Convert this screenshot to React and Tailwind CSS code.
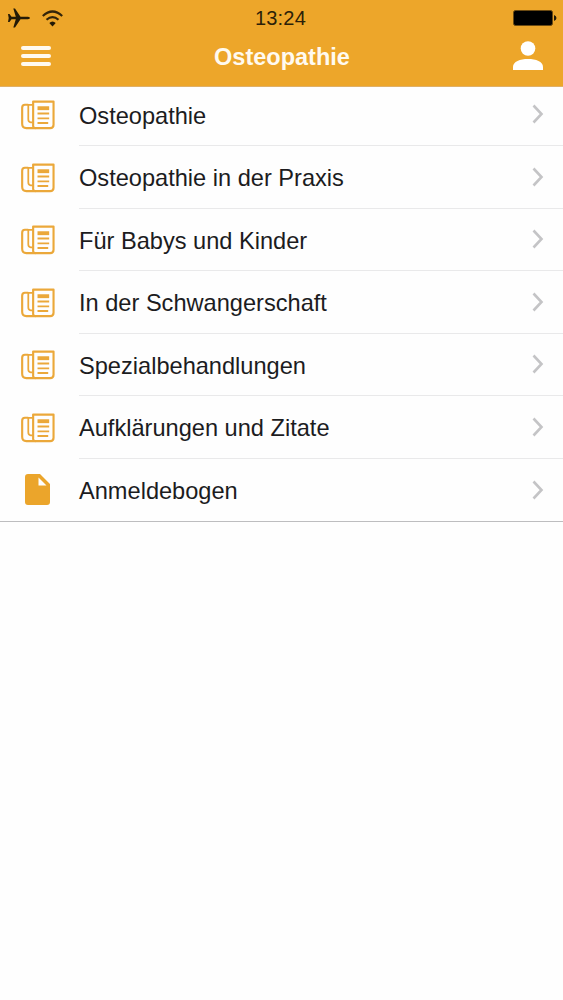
const entries = [
  { title: "Osteopathie", icon: "news" },
  { title: "Osteopathie in der Praxis", icon: "news" },
  { title: "Für Babys und Kinder", icon: "news" },
  { title: "In der Schwangerschaft", icon: "news" },
  { title: "Spezialbehandlungen", icon: "news" },
  { title: "Aufklärungen und Zitate", icon: "news" },
  { title: "Anmeldebogen", icon: "file" },
];

function NewsIcon() {
  return (
    <svg width="34" height="30" viewBox="0 0 35 30" fill="none" stroke="#eba83a" strokeWidth="2.200" strokeLinejoin="round">
      <path d="M12.500 1.200H33.500V25Q33.500 28.500 30 28.500H15Q12 28 12.500 25Z" />
      <path d="M12 4.500H7.500V19.500Q7.500 22.500 10 22.500H12" strokeWidth="1.800" />
      <path d="M7.500 4.500H4Q1.200 4.500 1.200 7.500V24Q1.200 28.500 5.500 28.500H15" />
      <path d="M17 8H29" strokeWidth="4" />
      <path d="M17 13.500H29M17 18.500H29M17 23.300H28" strokeWidth="2" />
    </svg>
  );
}

function FileIcon() {
  return (
    <svg width="25" height="31" viewBox="0 0 25 31" fill="#eba52b">
      <path fillRule="evenodd" d="M3 0H15L25 10V28Q25 31 22 31H3Q0 31 0 28V3Q0 0 3 0ZM13.500 3.500V11.500H21.500Z" />
    </svg>
  );
}

function StatusBar() {
  return (
    <div className="flex h-9 items-center justify-between pl-2 pr-1.5">
      <div className="flex w-[108px] items-center gap-3">
        <svg width="22" height="20" viewBox="0 0 22 20" fill="#241a06">
          <path d="M22 10Q22 11 20 11.200H12.500L7 19.500H5.300L7.800 11.200H3.500L1.500 14H0L0.700 10L0 6H1.500L3.500 8.800H7.800L5.300 0.500H7L12.500 8.800H20Q22 9 22 10Z" />
        </svg>
        <svg width="21" height="17" viewBox="0 0 21 17" fill="none" stroke="#33250a" strokeWidth="2.200">
          <path d="M0.800 6Q10.500 -3 20.200 6" />
          <path d="M4.500 9.800Q10.500 4.500 16.500 9.800" />
          <path d="M7.300 13Q10.500 10 13.700 13L10.500 16.500Z" fill="#241a06" stroke="none" />
        </svg>
      </div>
      <span className="text-[20px] tracking-[0.2px] text-[#2b1f08]">13:24</span>
      <div className="flex w-28 justify-end">
        <svg width="44" height="16" viewBox="0 0 44 16">
          <rect x="0.500" y="0.500" width="39" height="15" rx="2" fill="#000" stroke="#6b4a12" />
          <path d="M41 5Q43.500 6 43.500 8T41 11Z" fill="#241a06" />
        </svg>
      </div>
    </div>
  );
}

export default function App() {
  return (
    <div className="min-h-screen bg-[#fefefe] font-['Liberation_Sans',Arial,sans-serif]">
      <header className="relative z-10 h-[87px] border-b border-[#dfb069] bg-[#eda62a]">
        <StatusBar />
        <div className="flex h-[39px] items-center justify-between pl-[21px] pr-5">
          <button className="flex w-[30px] flex-col gap-1">
            <span className="h-1 rounded-sm bg-[#fffaf0]" />
            <span className="h-1 rounded-sm bg-[#fffaf0]" />
            <span className="h-1 rounded-sm bg-[#fffaf0]" />
          </button>
          <h1 className="pt-1 text-[23.5px] font-bold text-[#fffaf0]">Osteopathie</h1>
          <button>
            <svg width="30" height="29" viewBox="0 0 30 29" fill="#fff">
              <circle cx="15" cy="7.500" r="7.300" />
              <path d="M0 29V26C0 20.500 7 18 15 18S30 20.500 30 26V29Z" />
            </svg>
          </button>
        </div>
      </header>

      <ul className="-mt-[3.5px] border-b border-[#bdbdbf]">
        {entries.map((entry, i) => (
          <li key={entry.title} className="flex h-[62.5px] items-center">
            <span className="flex w-[79px] shrink-0 pl-[21px]">
              {entry.icon === "news" ? <span className="pt-px"><NewsIcon /></span> : <span className="pl-1"><FileIcon /></span>}
            </span>
            <div
              className={
                i < entries.length - 1
                  ? "flex h-full flex-1 items-center justify-between border-b border-[#e9e9ea] pr-[19px]"
                  : "flex h-full flex-1 items-center justify-between pr-[19px]"
              }
            >
              <span className="pt-1 text-[23.6px] text-[#1c1c1e]">{entry.title}</span>
              <svg width="12" height="20" viewBox="0 0 12 20" fill="none" stroke="#c4c4c6" strokeWidth="2.600">
                <path d="M1.500 1.500L9.500 10L1.500 18.500" />
              </svg>
            </div>
          </li>
        ))}
      </ul>
    </div>
  );
}
